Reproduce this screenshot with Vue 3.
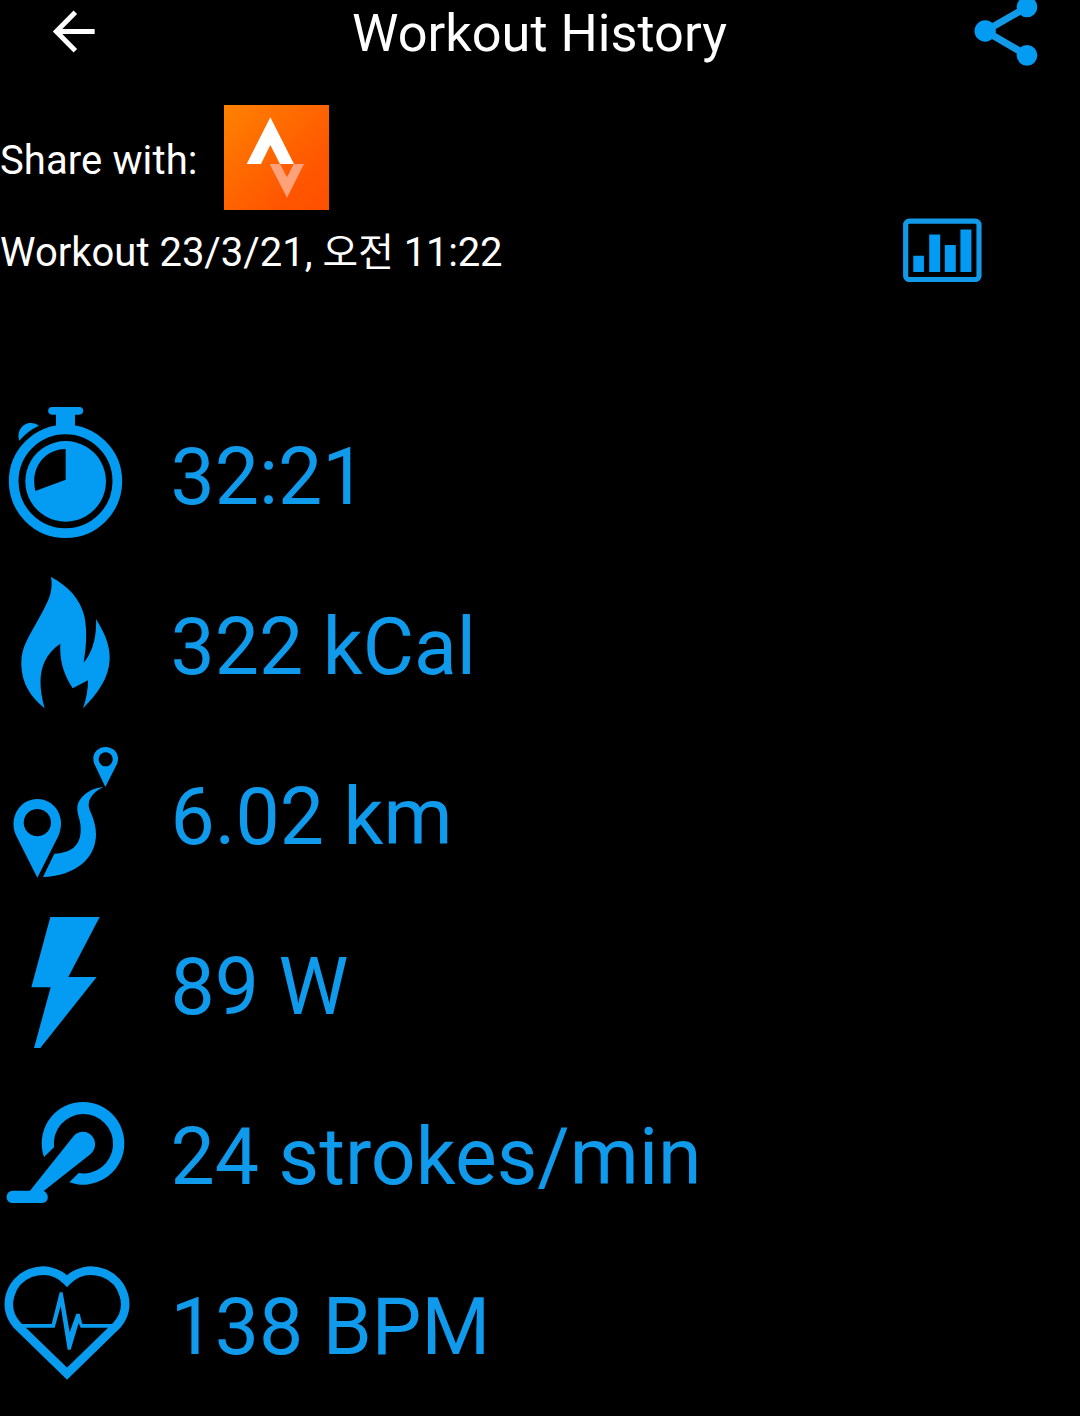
<script setup>
const stats = [
  { icon: 'time', view: '0 36 393 393', value: '32:21' },
  { icon: 'flame', view: '0 36 393 393', value: '322 kCal' },
  { icon: 'route', view: '0 36 393 393', value: '6.02 km' },
  { icon: 'power', view: '0 36 393 393', value: '89 W' },
  { icon: 'pedal', view: '0 -9 393 393', value: '24 strokes/min' },
  { icon: 'heart', view: '0 6 393 393', value: '138 BPM' },
]
</script>

<template>
  <main class="screen">
    <header class="bar">
      <svg class="back" viewBox="150 24 144 144" aria-label="Back">
        <path d="M226 37 169 94.5 226 152M169 94.5H284" fill="none" stroke="#fff" stroke-width="15" />
      </svg>
      <h1 class="title">Workout History</h1>
      <svg class="share" viewBox="270 0 225 210" aria-label="Share">
        <path d="M441 21 316 93 441 166" fill="none" stroke="#129ae9" stroke-width="21" />
        <circle cx="441" cy="21" r="31" />
        <circle cx="315.500" cy="93" r="32" />
        <circle cx="441" cy="166" r="31" />
      </svg>
    </header>

    <section class="share-row">
      <span class="label">Share with:</span>
      <svg class="strava" viewBox="27 30 315 315" aria-label="Strava">
        <defs>
          <linearGradient id="orange" x1="0" y1="0" x2="1" y2="1">
            <stop offset="0" stop-color="#ff8200" />
            <stop offset=".4" stop-color="#ff6900" />
            <stop offset=".75" stop-color="#ff5500" />
            <stop offset="1" stop-color="#ff5000" />
          </linearGradient>
        </defs>
        <rect x="27" y="30" width="315" height="315" fill="url(#orange)" />
        <path d="M166 67 237 207H195L166 150 138 207H95Z" fill="#fff" />
        <path d="M164 207H195L216 247 236 207H267L216 308Z" fill="#ffa27a" />
      </svg>
    </section>

    <section class="workout-row">
      <span class="label">Workout 23/3/21, <span class="meridiem">오전</span> <span class="clock">11:22</span></span>
      <svg class="chart" viewBox="69 654 238 194" aria-label="Chart">
        <rect x="77" y="663" width="221" height="176" rx="11" fill="none" stroke="#129ae9" stroke-width="15.500" />
        <path d="M100 767H132V816H100ZM148 703H181V816H148ZM195 735H228V816H195ZM242 688H275V816H242Z" />
      </svg>
    </section>

    <ul class="stats">
      <li v-for="stat in stats" :key="stat.icon" class="stat">
        <svg class="icon" :viewBox="stat.view">
          <template v-if="stat.icon === 'time'">
            <path d="M156 36H238A11.500 11.500 0 0 1 238 59H225V96H168V59H156A11.500 11.500 0 0 1 156 36Z" />
            <path d="M58 137C49 108 68 83 94 84Q108 85 117 92Q83 107 58 137Z" />
            <circle cx="196.500" cy="259" r="155.500" fill="none" stroke="#049cf2" stroke-width="29" />
            <path fill-rule="evenodd" d="M197 138A121 121 0 1 1 196.900 138ZM197 162V254L106 288C91 226 126 164 197 162Z" />
          </template>
          <path v-else-if="stat.icon === 'flame'" d="M153 36C204 63 240 101 253 153C262 199 259 242 251 293C273 267 291 223 288 162C315 206 330 240 329 283C327 340 292 387 249 430C260 399 264 371 264 346L218 370C193 330 178 291 181 236C114 281 112 353 134 430C91 394 66 357 64 300C62 249 86 217 112 169C138 120 162 87 153 36Z" />
          <template v-else-if="stat.icon === 'route'">
            <path fill-rule="evenodd" d="M316 156 285 91C270 61 290 36 317 36S364 62 349 91ZM317 52A21 21 0 1 0 317.100 52Z" />
            <path fill-rule="evenodd" d="M112 428 49 303C24 251 58 192 112 192S200 250 175 303ZM112 222A41 41 0 1 0 112.100 222Z" />
            <path d="M310 156C275 174 259 198 269 225C282 254 288 275 288 299C287 369 228 422 129 426L163 356C221 354 244 325 242 279C242 254 231 239 232 218C234 185 273 158 310 156Z" />
          </template>
          <path v-else-if="stat.icon === 'power'" d="M151 36H299L205 216H290L121 429H102L152 247H94Z" />
          <template v-else-if="stat.icon === 'pedal'">
            <path d="M132 201A124 124 0 1 1 208 277L236 249A89 89 0 1 0 162 172Z" />
            <path d="M221 138C239 119 267 123 279 142C290 159 286 180 272 192L131 303C147 309 150 338 126 339H38C14 339 14 303 38 302H90Z" />
          </template>
          <template v-else>
            <path d="M201 356 51 210C4 158 29 78 91 54C131 40 171 47 201 78C231 47 271 40 311 54C373 78 398 158 351 210Z" fill="none" stroke="#089bee" stroke-width="26" />
            <path d="M60 207H155L179 112H188L209 232 229 176H239L247 207H342V218H242L236 204 212 284H203L182 153 164 218H60Z" fill="#089bee" />
          </template>
        </svg>
        <span class="value">{{ stat.value }}</span>
      </li>
    </ul>
  </main>
</template>

<style>
body {
  margin: 0;
  background: #000;
}
</style>

<style scoped>
.screen {
  box-sizing: border-box;
  width: 1080px;
  height: 1416px;
  overflow: hidden;
  background: #000;
  color: #fff;
  font-family: Roboto, "Noto Sans CJK KR", sans-serif;
}
svg {
  display: block;
  flex: none;
  fill: #049cf2;
}
.bar {
  display: flex;
  align-items: flex-start;
  justify-content: space-between;
  height: 105px;
  padding: 0 35px 0 50px;
}
.back {
  width: 48px;
  height: 48px;
  margin-top: 8px;
}
.title {
  margin: 0 0 0 11px;
  font-size: 52.3px;
  font-weight: 400;
  line-height: 66px;
  white-space: nowrap;
}
.share {
  width: 75px;
  height: 70px;
}
.share-row {
  display: flex;
  align-items: center;
  height: 105px;
}
.share-row .label {
  width: 224px;
  padding-top: 6px;
  letter-spacing: 0.1px;
}
.label {
  font-size: 40px;
  line-height: 48px;
  white-space: nowrap;
}
.meridiem {
  font-size: 38.7px;
}
.clock {
  letter-spacing: -0.2px;
}
.strava {
  width: 105px;
  height: 105px;
}
.workout-row {
  display: flex;
  align-items: center;
  justify-content: space-between;
  height: 82px;
  padding-right: 98px;
}
.workout-row .label {
  padding-top: 3px;
}
.chart {
  width: 79px;
  height: 64.700px;
  margin-bottom: 2px;
}
.stats {
  display: flex;
  flex-direction: column;
  gap: 39px;
  margin: 115px 0 0;
  padding: 0;
  list-style: none;
}
.stat {
  display: flex;
  align-items: center;
  gap: 39.5px;
  height: 131px;
}
.icon {
  width: 131px;
  height: 131px;
}
.value {
  padding-top: 9px;
  color: #109aec;
  font-size: 78.75px;
  line-height: 92px;
  white-space: nowrap;
}
</style>
